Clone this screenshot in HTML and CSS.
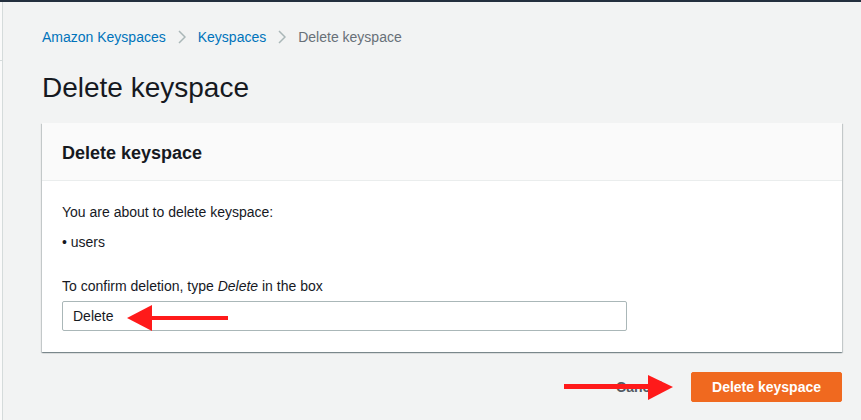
FILE: index.html
```html
<!DOCTYPE html>
<html lang="en">
  <head>
    <meta charset="UTF-8" />
    <meta name="viewport" content="width=device-width, initial-scale=1" />
    <title>Delete keyspace</title>
    <link rel="stylesheet" href="styles.css">
  </head>
  <body>
    <div class="topbar"></div>
    <div class="layout">
      <div class="sidenav"><span class="sidenav-tick"></span></div>
      <main class="content">
        <nav class="breadcrumbs">
          <a href="#">Amazon Keyspaces</a>
          <svg class="chevron" width="8" height="14" viewBox="0 0 8 14"><polyline points="1,1 7,7 1,13" /></svg>
          <a href="#">Keyspaces</a>
          <svg class="chevron" width="8" height="14" viewBox="0 0 8 14"><polyline points="1,1 7,7 1,13" /></svg>
          <span class="current">Delete keyspace</span>
        </nav>

        <h1 class="page-title">Delete keyspace</h1>

        <section class="card">
          <div class="card-header">
            <h2>Delete keyspace</h2>
          </div>
          <div class="card-body">
            <p>You are about to delete keyspace:</p>
            <p class="item">&bull; users</p>
            <label class="confirm-label" for="confirm">To confirm deletion, type <em>Delete</em> in the box</label>
            <input id="confirm" class="confirm-input" type="text" value="Delete" />
          </div>
        </section>

        <div class="actions">
          <button class="btn btn-link">Cancel</button>
          <button class="btn btn-primary">Delete keyspace</button>
        </div>
      </main>
    </div>

    <!-- annotation arrows -->
    <svg class="arrow arrow-input" width="101" height="26" viewBox="0 0 101 26">
      <polygon points="0,13 25,0 25,26" />
      <rect x="24" y="11" width="77" height="4" />
    </svg>
    <svg class="arrow arrow-button" width="109" height="25" viewBox="0 0 109 25">
      <rect x="0" y="9" width="86" height="5" />
      <polygon points="84,0 109,12 84,25" />
    </svg>
  </body>
</html>
```

FILE: styles.css
```css
/* Base styles */
body {
  margin: 0;
  position: relative;
  min-height: 420px;
  background: #f2f3f3;
  color: #16191f;
  font-family: "Liberation Sans", Arial, Helvetica, sans-serif;
  font-size: 14px;
  line-height: 20px;
}

.topbar {
  height: 2px;
  background: #232f3e;
}

/* Layout */
.layout {
  display: flex;
  min-height: 418px;
}

.sidenav {
  position: relative;
  width: 2px;
  background: #fafafa;
  border-right: 1px solid #d5dbdb;
}

.sidenav-tick {
  position: absolute;
  top: 58px;
  left: 0;
  width: 2px;
  height: 1px;
  background: #d5dbdb;
}

.content {
  flex: 1;
  padding: 25px 19px 0 39px;
}

/* Breadcrumbs */
.breadcrumbs {
  display: flex;
  align-items: center;
  gap: 11px;
  height: 20px;
}

.breadcrumbs a {
  color: #0073bb;
  text-decoration: none;
}

.breadcrumbs .current {
  color: #687078;
}

.chevron {
  margin: 0 1px;
}

.chevron polyline {
  fill: none;
  stroke: #aab7b8;
  stroke-width: 1.5;
}

/* Title */
.page-title {
  margin: 23px 0 17px;
  font-size: 28px;
  font-weight: 400;
  line-height: 36px;
  color: #16191f;
}

/* Card */
.card {
  background: #ffffff;
  box-shadow: 0 1px 1px 0 rgba(0, 28, 36, 0.3), 1px 1px 1px 0 rgba(0, 28, 36, 0.15), -1px 1px 1px 0 rgba(0, 28, 36, 0.15);
}

.card-header {
  background: #fafafa;
  border-bottom: 1px solid #eaeded;
  padding: 19px 20px 16px;
}

.card-header h2 {
  margin: 0;
  font-size: 18px;
  font-weight: 700;
  line-height: 22px;
}

.card-body {
  padding: 21px 20px 21px;
}

.card-body p {
  margin: 0;
}

.card-body .item {
  margin-top: 10px;
}

.confirm-label {
  display: block;
  margin: 24px 0 5px;
}

.confirm-input {
  display: block;
  box-sizing: border-box;
  width: 565px;
  height: 30px;
  padding: 0 10px;
  border: 1px solid #aab7b8;
  border-radius: 2px;
  font-family: inherit;
  font-size: 14px;
  color: #16191f;
}

/* Actions */
.actions {
  display: flex;
  justify-content: flex-end;
  gap: 8px;
  margin-top: 20px;
}

.btn {
  height: 30px;
  padding: 0 20px;
  border: 1px solid transparent;
  border-radius: 2px;
  font-family: inherit;
  font-size: 14px;
  font-weight: 700;
  cursor: pointer;
}

.btn-link {
  background: transparent;
  color: #545b64;
}

.btn-primary {
  background: #f0691f;
  border-color: #f0691f;
  color: #ffffff;
}

/* Annotation arrows */
.arrow {
  position: absolute;
  fill: #ff1a1a;
}

.arrow-input {
  left: 127px;
  top: 305px;
}

.arrow-button {
  left: 564px;
  top: 375px;
}
```
